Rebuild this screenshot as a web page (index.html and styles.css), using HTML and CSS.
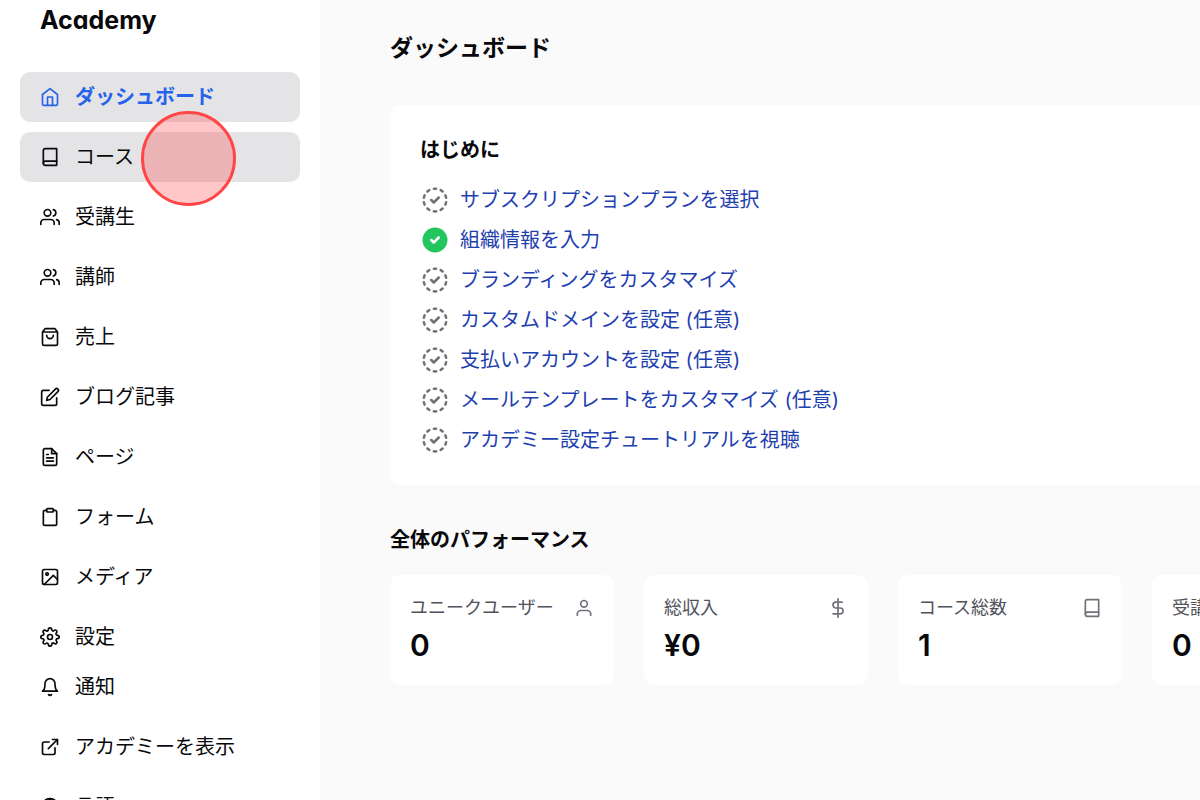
FILE: index.html
```html
<!DOCTYPE html>
<html lang="ja">
<head>
  <meta charset="UTF-8" />
  <meta name="viewport" content="width=device-width, initial-scale=1.0" />
  <title>Academy - ダッシュボード</title>
  <link rel="stylesheet" href="styles.css">
</head>
<body>
  <!-- shared icons -->
  <svg class="sprite" aria-hidden="true">
    <symbol id="book" viewBox="0 0 24 24"><path d="M4 19.5A2.5 2.5 0 0 1 6.500 17H20"/><path d="M6.500 2H20v20H6.500A2.500 2.500 0 0 1 4 19.500v-15A2.500 2.500 0 0 1 6.500 2z"/></symbol>
    <symbol id="users" viewBox="0 0 24 24"><path d="M17 21v-2a4 4 0 0 0-4-4H5a4 4 0 0 0-4 4v2"/><circle cx="9" cy="7" r="4"/><path d="M23 21v-2a4 4 0 0 0-3-3.870M16 3.130a4 4 0 0 1 0 7.750"/></symbol>
    <symbol id="check" viewBox="0 0 24 24"><circle cx="12" cy="12" r="9.100" pathLength="120" stroke-dasharray="4 8" stroke-dashoffset="-4"/><path d="m9 12 2 2 4-4"/></symbol>
  </svg>

  <div class="app">
    <aside class="sidebar">
      <div class="brand">Academy</div>
      <nav class="menu">
        <a class="item active" href="#"><svg class="icon" viewBox="0 0 24 24"><path d="m3 9 9-7 9 7v11a2 2 0 0 1-2 2H5a2 2 0 0 1-2-2z"/><path d="M9 22V12h6v10"/></svg>ダッシュボード</a>
        <a class="item hover" href="#"><svg class="icon"><use href="#book"/></svg>コース<span class="click-mark"></span></a>
        <a class="item" href="#"><svg class="icon"><use href="#users"/></svg>受講生</a>
        <a class="item" href="#"><svg class="icon"><use href="#users"/></svg>講師</a>
        <a class="item" href="#"><svg class="icon" viewBox="0 0 24 24"><path d="M6 2 3 6v14a2 2 0 0 0 2 2h14a2 2 0 0 0 2-2V6l-3-4zM3 6h18"/><path d="M16 10a4 4 0 0 1-8 0"/></svg>売上</a>
        <a class="item" href="#"><svg class="icon" viewBox="0 0 24 24"><path d="M11 4H4a2 2 0 0 0-2 2v14a2 2 0 0 0 2 2h14a2 2 0 0 0 2-2v-7"/><path d="M18.500 2.500a2.121 2.121 0 0 1 3 3L12 15l-4 1 1-4z"/></svg>ブログ記事</a>
        <a class="item" href="#"><svg class="icon" viewBox="0 0 24 24"><path d="M14 2H6a2 2 0 0 0-2 2v16a2 2 0 0 0 2 2h12a2 2 0 0 0 2-2V8z"/><path d="M14 2v6h6M16 13H8M16 17H8M10 9H8"/></svg>ページ</a>
        <a class="item" href="#"><svg class="icon" viewBox="0 0 24 24"><rect x="8" y="2" width="8" height="4" rx="1"/><path d="M16 4h2a2 2 0 0 1 2 2v14a2 2 0 0 1-2 2H6a2 2 0 0 1-2-2V6a2 2 0 0 1 2-2h2"/></svg>フォーム</a>
        <a class="item" href="#"><svg class="icon" viewBox="0 0 24 24"><rect x="3" y="3" width="18" height="18" rx="2"/><circle cx="8.5" cy="8.5" r="1.5"/><path d="m21 15-5-5L5 21"/></svg>メディア</a>
        <a class="item" href="#"><svg class="icon" viewBox="0 0 24 24"><circle cx="12" cy="12" r="3"/><path d="M19.4 15a1.65 1.65 0 0 0 .33 1.82l.06.06a2 2 0 0 1 0 2.83 2 2 0 0 1-2.83 0l-.06-.06a1.65 1.65 0 0 0-1.82-.33 1.65 1.65 0 0 0-1 1.51V21a2 2 0 0 1-2 2 2 2 0 0 1-2-2v-.09A1.65 1.65 0 0 0 9 19.4a1.65 1.65 0 0 0-1.82.33l-.06.06a2 2 0 0 1-2.83 0 2 2 0 0 1 0-2.83l.06-.06a1.65 1.65 0 0 0 .33-1.82 1.65 1.65 0 0 0-1.51-1H3a2 2 0 0 1-2-2 2 2 0 0 1 2-2h.09A1.65 1.65 0 0 0 4.6 9a1.65 1.65 0 0 0-.33-1.82l-.06-.06a2 2 0 0 1 0-2.83 2 2 0 0 1 2.83 0l.06.06a1.65 1.65 0 0 0 1.82.33H9a1.65 1.65 0 0 0 1-1.51V3a2 2 0 0 1 2-2 2 2 0 0 1 2 2v.09a1.65 1.65 0 0 0 1 1.51 1.65 1.65 0 0 0 1.82-.33l.06-.06a2 2 0 0 1 2.83 0 2 2 0 0 1 0 2.83l-.06.06a1.65 1.65 0 0 0-.33 1.82V9a1.65 1.65 0 0 0 1.51 1H21a2 2 0 0 1 2 2 2 2 0 0 1-2 2h-.09a1.65 1.65 0 0 0-1.51 1z"/></svg>設定</a>
      </nav>
      <nav class="menu">
        <a class="item" href="#"><svg class="icon" viewBox="0 0 24 24"><path d="M18 8A6 6 0 0 0 6 8c0 7-3 9-3 9h18s-3-2-3-9M13.730 21a2 2 0 0 1-3.460 0"/></svg>通知</a>
        <a class="item" href="#"><svg class="icon" viewBox="0 0 24 24"><path d="M15 3h6v6M10 14 21 3M18 13v6a2 2 0 0 1-2 2H5a2 2 0 0 1-2-2V8a2 2 0 0 1 2-2h6"/></svg>アカデミーを表示</a>
        <a class="item" href="#"><svg class="icon" viewBox="0 0 24 24"><circle cx="12" cy="12" r="10"/><path d="M2 12h20M12 2a15.300 15.300 0 0 1 4 10 15.300 15.300 0 0 1-4 10 15.300 15.300 0 0 1-4-10 15.300 15.300 0 0 1 4-10z"/></svg>言語</a>
      </nav>
    </aside>

    <main class="content">
      <h1 class="title">ダッシュボード</h1>

      <section class="start">
        <h2 class="heading">はじめに</h2>
        <ul class="steps">
          <li><svg class="check"><use href="#check"/></svg><a href="#">サブスクリプションプランを選択</a></li>
          <li><svg class="check" viewBox="0 0 24 24"><circle class="done" cx="12" cy="12" r="10"/><path class="tick" d="m9 12 2 2 4-4"/></svg><a href="#">組織情報を入力</a></li>
          <li><svg class="check"><use href="#check"/></svg><a href="#">ブランディングをカスタマイズ</a></li>
          <li><svg class="check"><use href="#check"/></svg><a href="#">カスタムドメインを設定 (任意)</a></li>
          <li><svg class="check"><use href="#check"/></svg><a href="#">支払いアカウントを設定 (任意)</a></li>
          <li><svg class="check"><use href="#check"/></svg><a href="#">メールテンプレートをカスタマイズ (任意)</a></li>
          <li><svg class="check"><use href="#check"/></svg><a href="#">アカデミー設定チュートリアルを視聴</a></li>
        </ul>
      </section>

      <h2 class="heading">全体のパフォーマンス</h2>
      <section class="stats">
        <div class="stat">
          <div class="label">ユニークユーザー<svg class="icon" viewBox="0 0 24 24"><path d="M20 21v-2a4 4 0 0 0-4-4H8a4 4 0 0 0-4 4v2"/><circle cx="12" cy="7" r="4"/></svg></div>
          <div class="value">0</div>
        </div>
        <div class="stat">
          <div class="label">総収入<svg class="icon" viewBox="0 0 24 24"><path d="M12 1v22M17 5H9.500a3.500 3.500 0 0 0 0 7h5a3.500 3.500 0 0 1 0 7H6"/></svg></div>
          <div class="value">¥0</div>
        </div>
        <div class="stat">
          <div class="label">コース総数<svg class="icon"><use href="#book"/></svg></div>
          <div class="value">1</div>
        </div>
        <div class="stat">
          <div class="label">受講生総数<svg class="icon"><use href="#users"/></svg></div>
          <div class="value">0</div>
        </div>
      </section>
    </main>
  </div>
</body>
</html>
```
FILE: styles.css
```css
* {
  box-sizing: border-box;
}

body {
  margin: 0;
  background: #fafafa;
  color: #09090b;
  font-family: Inter, "Noto Sans CJK JP", sans-serif;
  font-feature-settings: "cv11";
  font-size: 20px;
  line-height: 30px;
}

h1, h2, ul {
  margin: 0;
  padding: 0;
}

a {
  color: inherit;
  text-decoration: none;
}

.sprite {
  display: none;
}

.app {
  display: flex;
  height: 100vh;
  overflow: hidden;
}

/* Sidebar */
.sidebar {
  flex: 0 0 320px;
  padding: 0 20px;
  background: #fff;
}

.brand {
  padding: 5px 20px 37px;
  font-size: 25px;
  font-weight: 700;
}

.menu {
  display: flex;
  flex-direction: column;
  gap: 10px;
}

.item {
  position: relative;
  display: flex;
  align-items: center;
  gap: 15px;
  height: 50px;
  padding: 0 20px;
  border-radius: 10px;
}

.active,
.hover {
  background: #e4e4e7;
}

.active {
  color: #2563eb;
  font-weight: 600;
}

.icon,
.check {
  flex: none;
  fill: none;
  stroke: currentColor;
  stroke-width: 2;
  stroke-linecap: round;
  stroke-linejoin: round;
}

.icon {
  width: 20px;
  height: 20px;
}

/* Pointer highlight over the hovered item */
.click-mark {
  position: absolute;
  left: 121px;
  top: -21px;
  z-index: 1;
  width: 95px;
  height: 95px;
  border: 3px solid #ff4545;
  border-radius: 50%;
  background: rgba(255, 69, 69, 0.3);
  background-clip: padding-box;
}

/* Content */
.content {
  flex: 1;
  min-width: 0;
  padding: 30px 0 0 70px;
}

.title {
  margin-bottom: 38px;
  font-size: 23px;
  line-height: 37px;
  font-weight: 600;
}

.heading {
  font-size: 20px;
  line-height: 30px;
  font-weight: 600;
}

.start {
  margin-bottom: 40px;
  padding: 30px 30px 25px;
  border-radius: 10px 0 0 10px;
  background: #fff;
}

.steps {
  padding-top: 15px;
  list-style: none;
}

.steps li {
  display: flex;
  align-items: center;
  gap: 10px;
  height: 40px;
  color: #1e40af;
}

.check {
  width: 30px;
  height: 30px;
  color: #71717a;
}

.done {
  fill: #22c55e;
  stroke: none;
}

.tick {
  stroke: #fff;
}

.stats {
  display: grid;
  grid-auto-flow: column;
  grid-auto-columns: 224px;
  gap: 30px;
  margin-top: 20px;
}

.stat {
  padding: 20px;
  border-radius: 10px;
  background: #fff;
}

.label {
  display: flex;
  align-items: center;
  justify-content: space-between;
  height: 25px;
  color: #52525b;
  font-size: 18px;
}

.label .icon {
  color: #71717a;
}

.value {
  padding: 8px 0 2px;
  font-size: 30px;
  line-height: 35px;
  font-weight: 600;
}
```
